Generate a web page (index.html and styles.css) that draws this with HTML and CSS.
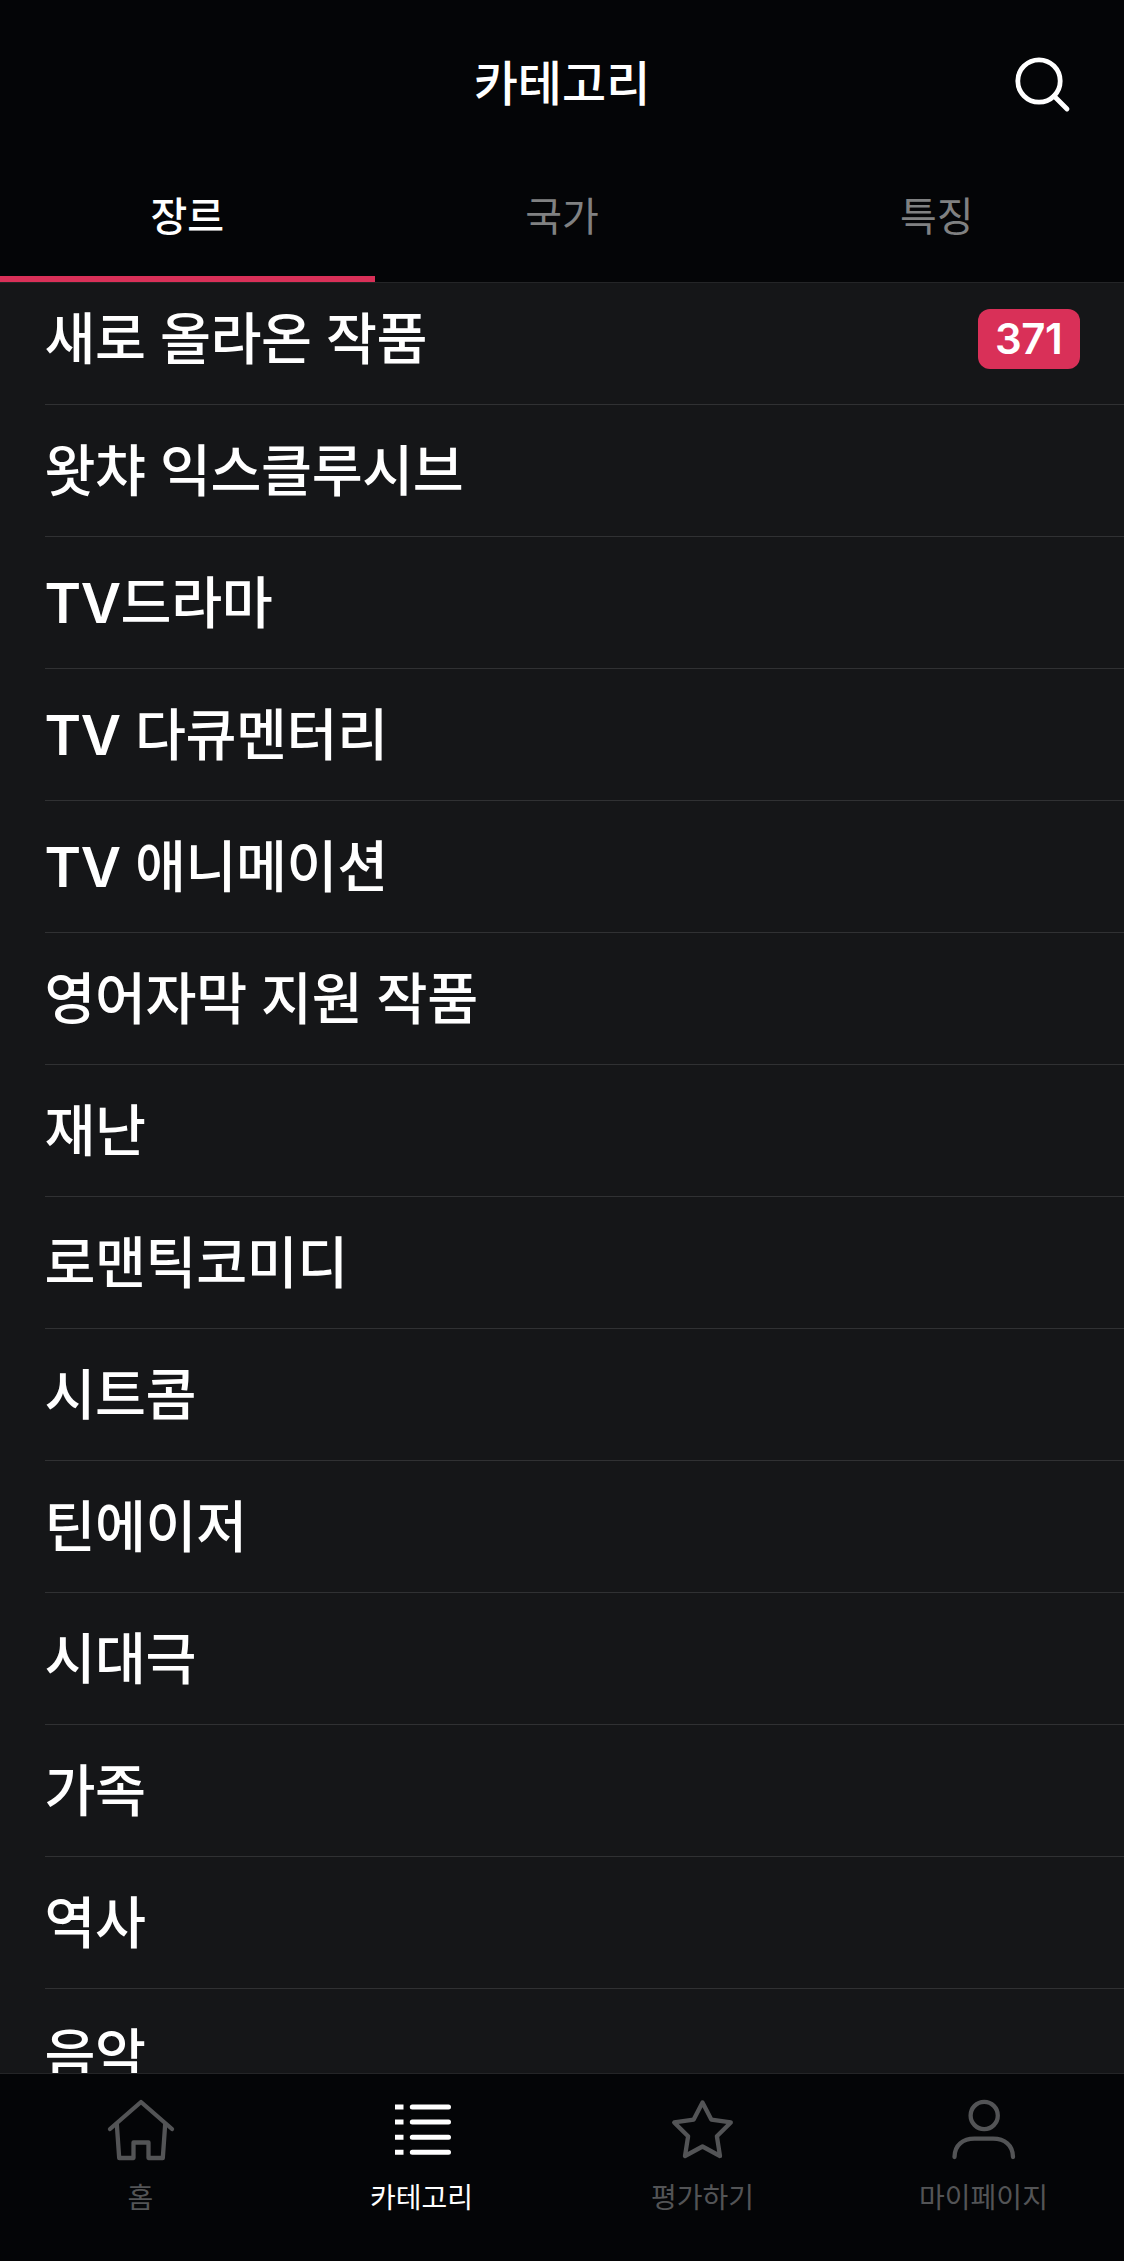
FILE: index.html
```
<!DOCTYPE html>
<html lang="ko">
<head>
  <meta charset="UTF-8">
  <meta name="viewport" content="width=device-width, initial-scale=1.0">
  <title>카테고리</title>
  <link rel="stylesheet" href="styles.css">
</head>
<body>
  <header class="header">
    <h1 class="title">카테고리</h1>
    <button class="search-button" aria-label="검색">
      <svg width="60" height="60" viewBox="0 0 60 60">
        <circle cx="27" cy="27" r="21.2" />
        <path d="M42 42L55 55" />
      </svg>
    </button>
  </header>

  <nav class="tabs">
    <a class="tab active">장르</a>
    <a class="tab">국가</a>
    <a class="tab">특징</a>
  </nav>

  <main class="content">
    <ul class="category-list">
      <li class="category"><span>새로 올라온 작품</span><span class="badge">371</span></li>
      <li class="category">왓챠 익스클루시브</li>
      <li class="category"><span><b>TV</b>드라마</span></li>
      <li class="category"><span><b>TV</b> 다큐멘터리</span></li>
      <li class="category"><span><b>TV</b> 애니메이션</span></li>
      <li class="category">영어자막 지원 작품</li>
      <li class="category">재난</li>
      <li class="category">로맨틱코미디</li>
      <li class="category">시트콤</li>
      <li class="category">틴에이저</li>
      <li class="category">시대극</li>
      <li class="category">가족</li>
      <li class="category">역사</li>
      <li class="category">음악</li>
    </ul>
  </main>

  <nav class="bottom-nav">
    <a class="nav-item">
      <svg class="icon" viewBox="0 0 72 66">
        <path d="M5 32L36 5L67 32" />
        <path d="M11.8 27L14.2 61H28.5V45.5H43.5V61H57.8L60.2 27" />
      </svg>
      <span>홈</span>
    </a>
    <a class="nav-item active">
      <svg class="icon icon-list" viewBox="0 0 72 66">
        <path class="dots" d="M9 10H17.5M9 25H17.5M9 40.2H17.5M9 55.3H17.5" />
        <path d="M26.3 10H62.5M26.3 25H62.5M26.3 40.2H62.5M26.3 55.3H62.5" />
      </svg>
      <span>카테고리</span>
    </a>
    <a class="nav-item">
      <svg class="icon" viewBox="0 0 72 66">
        <path d="M35.5 5.5L44.3 22.6L63.8 25.4L49.9 39.3L53 59L35.5 49.5L18 59L21.1 39.3L7.2 25.4L26.7 22.6Z" />
      </svg>
      <span>평가하기</span>
    </a>
    <a class="nav-item">
      <svg class="icon" viewBox="0 0 72 66">
        <circle cx="36.2" cy="18.5" r="13.6" />
        <path d="M6.5 60C6.5 48 15 41.6 26.5 41.6H45C56.5 41.6 65 48 65 60" />
      </svg>
      <span>마이페이지</span>
    </a>
  </nav>
</body>
</html>
```

FILE: styles.css
```
* {
  box-sizing: border-box;
}

body {
  margin: 0;
  height: 2261px;
  display: flex;
  flex-direction: column;
  overflow: hidden;
  background-color: #040507;
  color: #fff;
  font-family: Inter, "Noto Sans CJK KR", sans-serif;
}

.header {
  display: grid;
  grid-template-columns: 1fr auto 1fr;
  align-items: center;
  height: 168px;
  padding: 0 52px;
}

.title {
  grid-column: 2;
  margin: 0;
  font-size: 48px;
  font-weight: 500;
  line-height: 1;
}

.search-button {
  justify-self: end;
  width: 60px;
  height: 60px;
  padding: 0;
  border: none;
  background: none;
}

svg {
  display: block;
  fill: none;
  stroke: currentColor;
  stroke-linecap: round;
  stroke-linejoin: round;
}

.search-button svg {
  color: #fff;
  stroke-width: 4.8;
}

.tabs {
  display: flex;
  height: 115px;
  border-bottom: 1px solid #242527;
}

.tab {
  flex: 1;
  display: flex;
  justify-content: center;
  align-items: center;
  padding-bottom: 17px;
  border-bottom: 6px solid transparent;
  color: #808182;
  font-size: 40px;
}

.tab.active {
  border-color: #d93058;
  color: #fff;
  font-weight: 500;
}

.content {
  flex: 1;
  min-height: 0;
  overflow: hidden;
  background-color: #151618;
}

/* list is scrolled a little under the tabs */
.category-list {
  margin: -10px 0 0;
  padding: 0 0 0 45px;
  list-style: none;
}

.category {
  display: flex;
  justify-content: space-between;
  align-items: center;
  height: 132px;
  padding-right: 44px;
  border-bottom: 1px solid #303133;
  font-size: 55.4px;
  font-weight: 500;
  line-height: 1;
  letter-spacing: -0.4px;
  text-indent: -0.5px;
}

.category b {
  font-weight: 600;
}

.badge {
  width: 102px;
  height: 60px;
  border-radius: 12px;
  background-color: #d93058;
  font-size: 42px;
  font-weight: 600;
  line-height: 59px;
  text-align: center;
}

.bottom-nav {
  display: flex;
  height: 188px;
  border-top: 1px solid #242527;
}

.nav-item {
  flex: 1;
  display: flex;
  flex-direction: column;
  align-items: center;
  gap: 20px;
  padding-top: 23px;
  color: #535456;
  font-size: 28px;
  line-height: 30px;
}

.nav-item.active {
  color: #fff;
}

.icon {
  width: 72px;
  height: 66px;
  stroke-width: 4.3;
}

.icon-list {
  stroke-width: 5;
}

.icon-list .dots {
  stroke-linecap: butt;
}
```
